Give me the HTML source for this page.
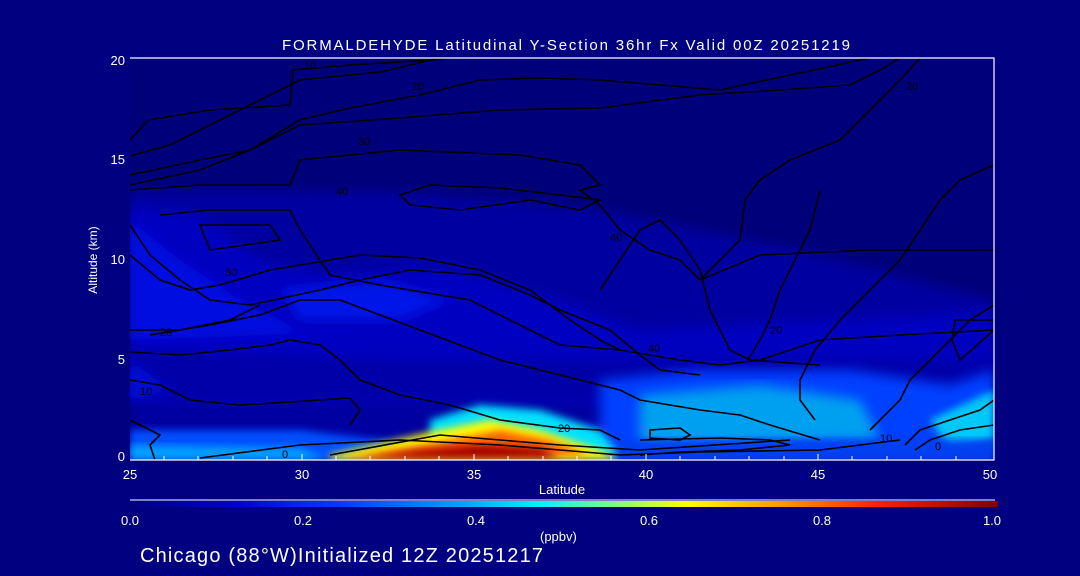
<!DOCTYPE html>
<html><head><meta charset="utf-8"><style>
html,body{margin:0;padding:0;background:#000080;}
svg{display:block}
.w{font-family:"Liberation Sans",sans-serif;fill:#fff}
.k{font-family:"Liberation Sans",sans-serif;fill:#000}
</style></head><body>
<svg width="1080" height="576" viewBox="0 0 1080 576" xmlns="http://www.w3.org/2000/svg">
<defs>
<filter id="b" x="-10%" y="-10%" width="120%" height="120%"><feGaussianBlur stdDeviation="6"/></filter>
<filter id="b2" x="-20%" y="-20%" width="140%" height="140%"><feGaussianBlur stdDeviation="4"/></filter>
<clipPath id="c"><rect x="130" y="58" width="864" height="402"/></clipPath>
<linearGradient id="cb" x1="0" x2="1">
<stop offset="0" stop-color="#000080"/><stop offset="0.12" stop-color="#0000d0"/>
<stop offset="0.25" stop-color="#0040ff"/><stop offset="0.38" stop-color="#00a0ff"/>
<stop offset="0.47" stop-color="#00f0ff"/><stop offset="0.56" stop-color="#80ff80"/>
<stop offset="0.64" stop-color="#ffff00"/><stop offset="0.76" stop-color="#ff9000"/>
<stop offset="0.86" stop-color="#ff2000"/><stop offset="1" stop-color="#800000"/>
</linearGradient>
</defs>
<rect width="1080" height="576" fill="#000080"/>
<g clip-path="url(#c)">
<rect x="130" y="58" width="864" height="402" fill="#00007a"/>
<path d="M130 190 L400 192 L600 210 L800 250 L994 300 L994 460 L130 460Z" fill="#0000a0" filter="url(#b)"/>
<path d="M130 205 L200 215 L260 260 L330 275 L440 265 L560 300 L640 330 L820 320 L994 310 L994 400 L130 400Z" fill="#0000c0" filter="url(#b)"/>
<path d="M130 220 L180 260 L240 300 L300 330 L400 330 L130 340Z" fill="#0010e0" filter="url(#b)"/>
<path d="M280 290 L380 280 L450 300 L400 320 L300 320Z" fill="#0018e8" filter="url(#b)"/>
<path d="M130 350 L400 360 L994 360 L994 400 L130 400Z" fill="#0000a8" filter="url(#b)"/>
<path d="M130 360 L170 390 L130 400Z" fill="#0010d8" filter="url(#b)"/>
<path d="M600 380 L700 370 L850 370 L950 385 L994 370 L994 460 L600 460Z" fill="#0040ff" filter="url(#b)"/>
<path d="M640 395 L760 385 L860 400 L880 440 L640 445Z" fill="#00a0f0" filter="url(#b)"/>
<path d="M930 420 L994 390 L994 440 L950 450Z" fill="#00c8f8" filter="url(#b2)"/>
<path d="M130 430 L300 430 L380 440 L420 445 L420 460 L130 460Z" fill="#0050ff" filter="url(#b2)"/>
<path d="M130 445 L300 448 L330 460 L130 460Z" fill="#00a0ff" filter="url(#b2)"/>
<path d="M430 420 L480 405 L540 410 L600 430 L620 455 L430 458Z" fill="#00e0ff" filter="url(#b2)"/>
<path d="M330 455 L440 430 L490 420 L540 430 L600 450 L620 460 L330 460Z" fill="#ffff00" filter="url(#b2)"/>
<path d="M350 458 L450 440 L500 430 L550 440 L590 455 L350 460Z" fill="#ff6000" filter="url(#b2)"/>
<path d="M360 458 L420 450 L480 445 L540 448 L560 458Z" fill="#a00000" filter="url(#b2)"/>
<rect x="620" y="440" width="374" height="20" fill="#0040f0" filter="url(#b2)"/>
<g fill="none" stroke="#000" stroke-width="1.6">
<path d="M130 140 L148 120 L210 110 L290 105 L293 70 L350 65 L430 60 L450 58"/>
<path d="M130 156 L170 145 L220 120 L300 80 L380 72 L440 58"/>
<path d="M130 175 L200 160 L250 150 L300 120 L350 108 L420 95 L480 80 L540 78 L600 80 L720 90 L870 58"/>
<path d="M130 185 L200 170 L250 150 L300 125 L400 118 L500 110 L600 108 L700 95 L780 90 L850 85 L880 70 L900 58"/>
<path d="M130 190 L200 185 L290 185 L300 160 L400 150 L520 155 L580 165 L600 185 L580 190 L600 205 L620 230 L650 250 L680 260 L700 280 L760 255 L870 250 L994 250"/>
<path d="M400 195 L430 185 L500 188 L560 195 L600 200 L580 210 L530 200 L460 210 L410 205Z"/>
<path d="M160 215 L210 210 L290 210 L300 230 L320 260 L330 275 L380 285 L470 300 L530 330 L560 345 L620 350 L680 360 L720 365 L760 360 L820 340 L900 335 L994 330"/>
<path d="M130 225 L150 255 L180 280 L210 300 L250 305 L320 290 L360 280 L410 270 L480 275 L530 295 L560 310 L610 330 L640 355 L660 370 L700 375"/>
<path d="M130 255 L160 280 L190 290 L220 285 L270 270 L300 265 L360 255 L420 258 L480 270 L530 290 L570 320 L600 340 L620 350"/>
<path d="M200 225 L270 225 L280 240 L210 250Z"/>
<path d="M150 335 L210 325 L260 315 L300 300 L340 300 L380 315 L420 330 L460 345 L500 360 L540 370 L580 380 L620 390 L640 400 L700 410 L740 415 L770 425 L820 440"/>
<path d="M130 330 L180 330 L230 320 L260 305"/>
<path d="M130 352 L180 355 L230 350 L270 345 L290 340 L320 345 L340 360 L360 380 L400 395 L450 405 L500 420 L560 428 L600 430 L620 440"/>
<path d="M130 380 L160 385 L190 400 L240 405 L290 402 L350 398 L360 410 L350 425"/>
<path d="M130 420 L160 435 L150 445 L155 460"/>
<path d="M200 458 L300 445 L400 440 L500 445 L560 450 L620 455 L700 452 L820 450 L900 440"/>
<path d="M330 455 L440 435 L500 440 L560 445 L640 450 L790 440"/>
<path d="M600 290 L620 260 L640 230 L660 220 L680 240 L700 270 L710 310 L730 350 L750 360 L820 365"/>
<path d="M700 280 L720 260 L740 240 L745 200 L760 180 L790 160 L840 140 L880 100 L900 80 L920 58"/>
<path d="M748 360 L760 340 L770 320 L780 290 L790 270 L800 250 L810 230 L820 190"/>
<path d="M815 420 L800 400 L800 380 L815 350 L840 320 L860 300 L880 280 L900 260 L920 230 L940 200 L960 180 L994 165"/>
<path d="M870 430 L880 420 L900 400 L910 380 L930 360 L950 340 L970 320 L994 305"/>
<path d="M955 320 L994 320 L994 330 L960 360 L952 340Z"/>
<path d="M905 445 L920 430 L950 420 L980 410 L994 400"/>
<path d="M915 450 L930 440 L960 430 L994 425"/>
<path d="M650 430 L680 428 L690 435 L680 440 L650 438Z"/>
<path d="M640 440 L720 438 L770 440 L790 445 L740 450 L680 452 L640 455"/>
</g>
<g font-size="11" class="k"><text class="k" x="304" y="69">10</text><text class="k" x="412" y="90">20</text><text class="k" x="358" y="145">30</text><text class="k" x="336" y="195">40</text><text class="k" x="610" y="241">40</text><text class="k" x="648" y="352">40</text><text class="k" x="225" y="276">30</text><text class="k" x="160" y="336">20</text><text class="k" x="558" y="432">20</text><text class="k" x="770" y="334">20</text><text class="k" x="880" y="442">10</text><text class="k" x="935" y="450">0</text><text class="k" x="282" y="458">0</text><text class="k" x="140" y="395">10</text><text class="k" x="906" y="90">20</text></g>
</g>
<g stroke="#fff" stroke-width="1.2" fill="none">
<path d="M130 58 L994 58 L994 460 L130 460"/>
</g>
<g stroke="#fff" stroke-width="1">
<path d="M164 460v-4M198 460v-4M233 460v-4M267 460v-4M302 460v-6M336 460v-4M370 460v-4M405 460v-4M439 460v-4M474 460v-6M508 460v-4M543 460v-4M577 460v-4M611 460v-4M646 460v-6M680 460v-4M715 460v-4M749 460v-4M784 460v-4M818 460v-6M852 460v-4M887 460v-4M921 460v-4M956 460v-4"/>
</g>
<text class="w" x="282" y="50" font-size="15" textLength="568" lengthAdjust="spacing">FORMALDEHYDE Latitudinal Y-Section 36hr  Fx Valid 00Z 20251219</text>
<g font-size="13" text-anchor="end" class="w"><text class="w" x="125" y="65">20</text><text class="w" x="125" y="164">15</text><text class="w" x="125" y="264">10</text><text class="w" x="125" y="364">5</text><text class="w" x="125" y="461">0</text></g>
<text class="w" x="97" y="260" font-size="12" text-anchor="middle" transform="rotate(-90 97 260)">Altitude (km)</text>
<g font-size="13" text-anchor="middle"><text class="w" x="130" y="479">25</text><text class="w" x="302" y="479">30</text><text class="w" x="474" y="479">35</text><text class="w" x="646" y="479">40</text><text class="w" x="818" y="479">45</text><text class="w" x="990" y="479">50</text></g>
<text class="w" x="562" y="494" font-size="13" text-anchor="middle">Latitude</text>
<line x1="130" y1="500" x2="995" y2="500" stroke="#fff" stroke-width="1"/>
<rect x="130" y="501" width="868" height="6" fill="url(#cb)"/>
<g font-size="13" text-anchor="middle"><text class="w" x="130" y="525">0.0</text><text class="w" x="303" y="525">0.2</text><text class="w" x="476" y="525">0.4</text><text class="w" x="649" y="525">0.6</text><text class="w" x="822" y="525">0.8</text><text class="w" x="992" y="525">1.0</text></g>
<text class="w" x="540" y="541" font-size="13">(ppbv)</text>
<text class="w" x="140" y="562" font-size="20" textLength="403" lengthAdjust="spacing">Chicago (88°W)Initialized 12Z 20251217</text>
</svg>
</body></html>
